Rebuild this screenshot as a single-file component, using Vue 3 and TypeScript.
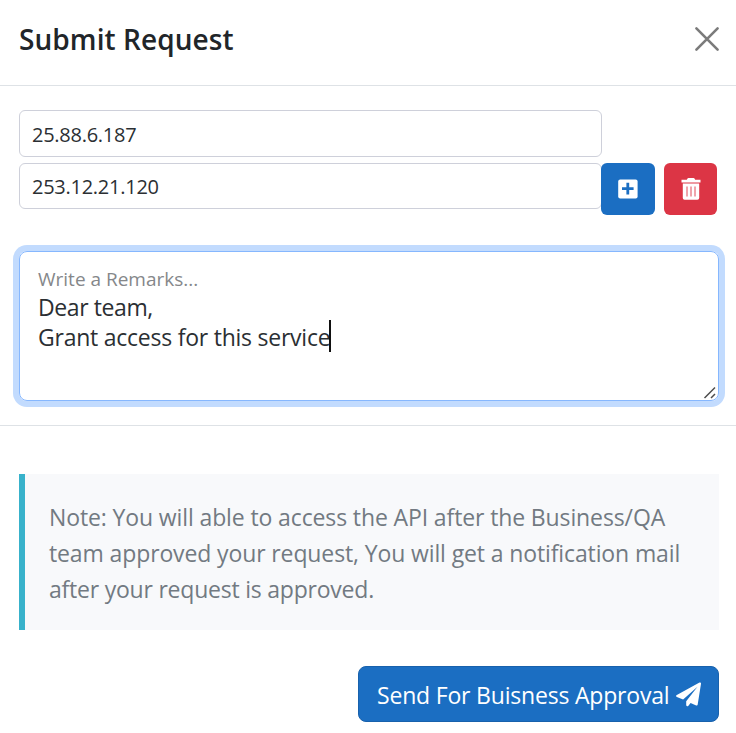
<script setup lang="ts">
import { ref } from 'vue'

const addresses = ref<string[]>(['25.88.6.187', '253.12.21.120'])
const remarks: string[] = ['Dear team,', 'Grant access for this service']
const note: string[] = [
  'Note: You will able to access the API after the Business/QA',
  'team approved your request, You will get a notification mail',
  'after your request is approved.',
]
</script>

<template>
  <main class="dialog">
    <header class="head">
      <h1 class="title"><span>Submit Request</span></h1>
      <button class="close" type="button" aria-label="Close">
        <svg viewBox="0 0 24 24" width="24" height="24"><path d="M1.4 1.4 22.6 22.6M22.6 1.4 1.4 22.6" /></svg>
      </button>
    </header>

    <section class="body">
      <div v-for="(address, i) in addresses" :key="i" class="row">
        <div class="field" :class="'field-' + i"><span>{{ address }}</span></div>
        <template v-if="i === addresses.length - 1">
          <button class="square add" type="button" aria-label="Add">
            <svg viewBox="0 0 20 20" width="20" height="20">
              <rect x="0.2" y="0.4" width="19.4" height="19.2" rx="2" fill="#fff" />
              <path d="M9.8 3.8v11.8M4 9.7h11.6" stroke="#1b6ec2" stroke-width="2.8" fill="none" />
            </svg>
          </button>
          <button class="square remove" type="button" aria-label="Delete">
            <svg viewBox="0 0 20 22" width="20" height="22">
              <path fill="#fff" d="M.5 1.8h5.3L6.5.6Q6.8.1 7.4.1h5.2q.6 0 .9.5l.7 1.2h5.3v2.8H.5zM1.8 5.400h16.400v14.500q0 1.800-1.800 1.800H3.600q-1.800 0-1.800-1.800z" />
              <path d="M6 8.500v10M10 8.500v10M14 8.500v10" stroke="#dc3545" stroke-width="0.9" fill="none" />
            </svg>
          </button>
        </template>
      </div>

      <div class="remarks" role="textbox" aria-multiline="true">
        <div class="hint"><span>Write a Remarks...</span></div>
        <div v-for="(line, i) in remarks" :key="i" class="line">
          <span :class="'rem-' + i">{{ line }}</span><i v-if="i === remarks.length - 1" class="caret"></i>
        </div>
        <svg class="grip" viewBox="0 0 14 14" width="14" height="14"><path d="M1.5 12 12 1.5M8 12l4-4" /></svg>
      </div>
    </section>

    <footer class="foot">
      <div class="note">
        <div v-for="(line, i) in note" :key="i" class="note-line"><span :class="'note-' + i">{{ line }}</span></div>
      </div>
      <button class="send" type="button">
        <span class="send-text">Send For Buisness Approval</span>
        <svg viewBox="0 0 25 25" width="25" height="25">
          <path fill="#fff" d="M23.500.6Q25.200 0 25 1.800L21.700 22.600Q21.500 23.900 20.200 23.400L14.600 21 12.200 23.900Q10.900 24.800 10.200 23.300V19.200L21.500 4.800 7.100 17.600.9 15Q-.8 14.100.8 13.100z" />
        </svg>
      </button>
    </footer>
  </main>
</template>

<style>
body {
  background: #fff;
}
</style>

<style scoped>
.dialog {
  box-sizing: border-box;
  width: 736px;
  height: 733px;
  overflow: hidden;
  font-family: "Open Sans", "Noto Sans", sans-serif;
  color: #212529;
}
.dialog * {
  box-sizing: border-box;
}
span {
  white-space: nowrap;
}
button {
  border: 0;
  padding: 0;
  font: inherit;
}
.head {
  display: flex;
  justify-content: space-between;
  height: 86px;
  padding: 19px 17px 0 19px;
  border-bottom: 1px solid #dee2e6;
}
.title {
  margin: 0;
  font-size: 28px;
  font-weight: 600;
  line-height: 40px;
  letter-spacing: 0.08px;
}
.close {
  width: 24px;
  height: 24px;
  margin-top: 8px;
  background: none;
}
.close svg {
  display: block;
  overflow: visible;
  fill: none;
  stroke: #7b7b7b;
  stroke-width: 2.6;
  stroke-linecap: round;
}
.body {
  height: 340px;
  padding: 24px 17px 0 19px;
  border-bottom: 1px solid #dee2e6;
}
.row {
  display: flex;
}
.field {
  width: 583px;
  height: 47px;
  margin-bottom: 6px;
  padding: 0 12px;
  border: 1px solid #ced0da;
  border-radius: 6px;
  color: #2b2f33;
  font-size: 20px;
  line-height: 47px;
  letter-spacing: -0.26px;
}
.field-1 {
  height: 46px;
  margin-right: -1px;
  line-height: 46px;
}
.square {
  display: flex;
  align-items: center;
  justify-content: center;
  width: 54px;
  height: 52px;
  border-radius: 6px;
}
.add {
  background: #1b6ec2;
}
.remove {
  width: 53px;
  margin-left: 9px;
  background: #dc3545;
}
.remarks {
  position: relative;
  width: 700px;
  height: 150px;
  margin-top: 36px;
  padding: 13px 18px;
  border: 1px solid #86b7fe;
  border-radius: 8px;
  box-shadow: 0 0 0 6px #c2dbfe;
}
.hint {
  height: 27px;
  font-size: 19px;
  line-height: 28px;
  color: #85878a;
}
.line {
  display: flex;
  height: 30px;
  color: #2b2f33;
  font-size: 23px;
  line-height: 30px;
}
.rem-0 {
  letter-spacing: -0.4px;
}
.rem-1 {
  letter-spacing: -0.24px;
}
.caret {
  width: 2px;
  height: 32px;
  margin: -2px 0 0 -1px;
  background: #111;
}
.grip {
  position: absolute;
  right: 1px;
  bottom: 0;
  fill: none;
  stroke: #4d4d4d;
  stroke-width: 1.5;
}
.foot {
  display: flex;
  flex-direction: column;
  align-items: flex-end;
  padding: 48px 17px 0 19px;
}
.note {
  width: 700px;
  height: 156px;
  padding: 25px 24px;
  border-left: 6px solid #38b2cb;
  background: #f8f9fb;
  color: #727a82;
  font-size: 23px;
}
.note-line {
  height: 36px;
  line-height: 36px;
  letter-spacing: -0.12px;
}
.note-2 {
  letter-spacing: -0.22px;
}
.send {
  display: flex;
  align-items: center;
  width: 361px;
  height: 56px;
  margin-top: 36px;
  padding: 0 17px;
  border: 1px solid #1861ac;
  border-radius: 8px;
  background: #1b6ec2;
  color: #fff;
  font-size: 23px;
}
.send-text {
  padding: 2px 0 0 1px;
  letter-spacing: -0.19px;
}
.send svg {
  margin-left: auto;
}
</style>
